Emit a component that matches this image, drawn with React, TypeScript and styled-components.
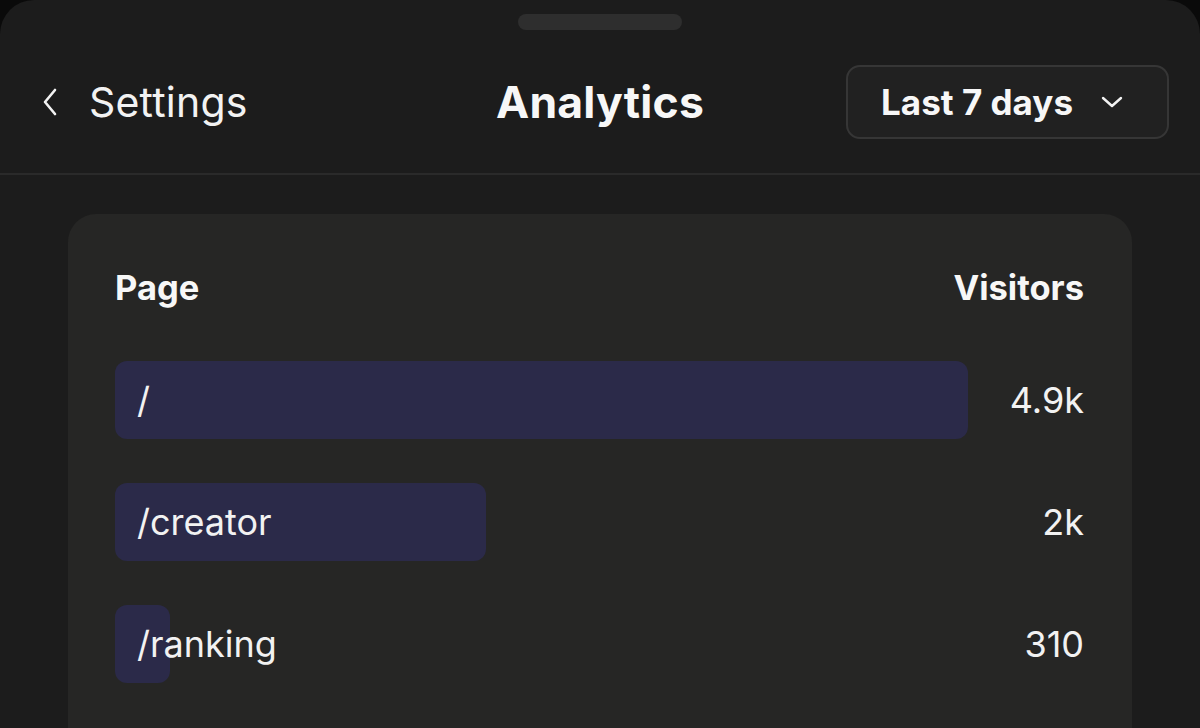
import styled, { createGlobalStyle } from 'styled-components';

const GlobalStyle = createGlobalStyle`
  html, body {
    margin: 0;
    padding: 0;
    background: #0a0a0a;
    overflow: hidden;
  }
  body {
    font-family: Inter, 'Noto Sans', 'Liberation Sans', sans-serif;
    color: #f5f5f5;
  }
`;

const Sheet = styled.div`
  height: 728px;
  background: #1c1c1c;
  border-radius: 34px 34px 0 0;
  display: flex;
  flex-direction: column;
  align-items: stretch;
  overflow: hidden;
`;

const Handle = styled.div`
  align-self: center;
  flex: none;
  width: 164px;
  height: 16px;
  margin-top: 14px;
  border-radius: 8px;
  background: #2e2e2e;
`;

const Header = styled.header`
  flex: none;
  height: 143px;
  display: grid;
  grid-template-columns: 1fr auto 1fr;
  align-items: center;
  padding: 0 31px;
  border-bottom: 2px solid #2a2a2a;
`;

const BackLink = styled.button`
  justify-self: start;
  display: flex;
  align-items: center;
  gap: 30px;
  margin-left: 10px;
  background: none;
  border: 0;
  padding: 0;
  color: #f2f2f2;
  font-family: inherit;
  font-size: 41px;
  font-weight: 400;
  letter-spacing: 0.2px;
  cursor: pointer;
`;

const Title = styled.h1`
  margin: 0;
  font-size: 44.5px;
  font-weight: 700;
  color: #f7f7f7;
  letter-spacing: 0.2px;
`;

const RangeSelect = styled.button`
  justify-self: end;
  display: flex;
  align-items: center;
  gap: 28px;
  height: 74px;
  padding: 0 44px 0 33px;
  background: #212121;
  border: 2px solid #363636;
  border-radius: 14px;
  color: #f7f7f7;
  font-family: inherit;
  font-size: 35px;
  font-weight: 700;
  cursor: pointer;
`;

const Card = styled.section`
  flex: none;
  height: 640px;
  margin: 39px 68px 0;
  padding: 53px 48px 0 47px;
  background: #262625;
  border-radius: 28px;
`;

const TableHead = styled.div`
  display: flex;
  justify-content: space-between;
  align-items: center;
  height: 40px;
  font-size: 34.5px;
  font-weight: 700;
  color: #f7f7f7;
  margin-bottom: 54px;
`;

const Rows = styled.div`
  display: flex;
  flex-direction: column;
  gap: 44px;
`;

const Row = styled.div`
  display: flex;
  align-items: center;
  height: 78px;
`;

const Track = styled.div`
  position: relative;
  flex: 1;
  height: 100%;
  display: flex;
  align-items: center;
  margin-right: 116px;
`;

const Bar = styled.div`
  position: absolute;
  left: 0;
  top: 0;
  bottom: 0;
  background: #2b2a49;
  border-radius: 12px;
`;

const PathLabel = styled.span`
  position: relative;
  padding-left: 22px;
  font-size: 36px;
  color: #f2f2f2;
`;

const Count = styled.span`
  font-size: 36px;
  color: #f2f2f2;
  text-align: right;
  margin-left: -116px;
  width: 116px;
`;

const rows = [
  { path: '/', label: '4.9k', visitors: 4900 },
  { path: '/creator', label: '2k', visitors: 2130 },
  { path: '/ranking', label: '310', visitors: 315 },
];

const max = Math.max(...rows.map((r) => r.visitors));

const App = () => (
  <>
    <GlobalStyle />
    <Sheet>
      <Handle />
      <Header>
        <BackLink type='button'>
          <svg width='18' height='30' viewBox='0 0 18 30' fill='none'>
            <polyline
              points='14,3 4,15 14,27'
              stroke='#f2f2f2'
              strokeWidth='2.6'
              strokeLinecap='round'
              strokeLinejoin='round'
            />
          </svg>
          Settings
        </BackLink>
        <Title>Analytics</Title>
        <RangeSelect type='button'>
          Last 7 days
          <svg width='22' height='14' viewBox='0 0 22 14' fill='none'>
            <polyline
              points='2,3 11,11 20,3'
              stroke='#f2f2f2'
              strokeWidth='2.4'
              strokeLinecap='round'
              strokeLinejoin='round'
            />
          </svg>
        </RangeSelect>
      </Header>
      <Card>
        <TableHead>
          <span>Page</span>
          <span>Visitors</span>
        </TableHead>
        <Rows>
          {rows.map((r) => (
            <Row key={r.path}>
              <Track>
                <Bar style={{ width: `${(r.visitors / max) * 100}%` }} />
                <PathLabel>{r.path}</PathLabel>
              </Track>
              <Count>{r.label}</Count>
            </Row>
          ))}
        </Rows>
      </Card>
    </Sheet>
  </>
);

export default App;
